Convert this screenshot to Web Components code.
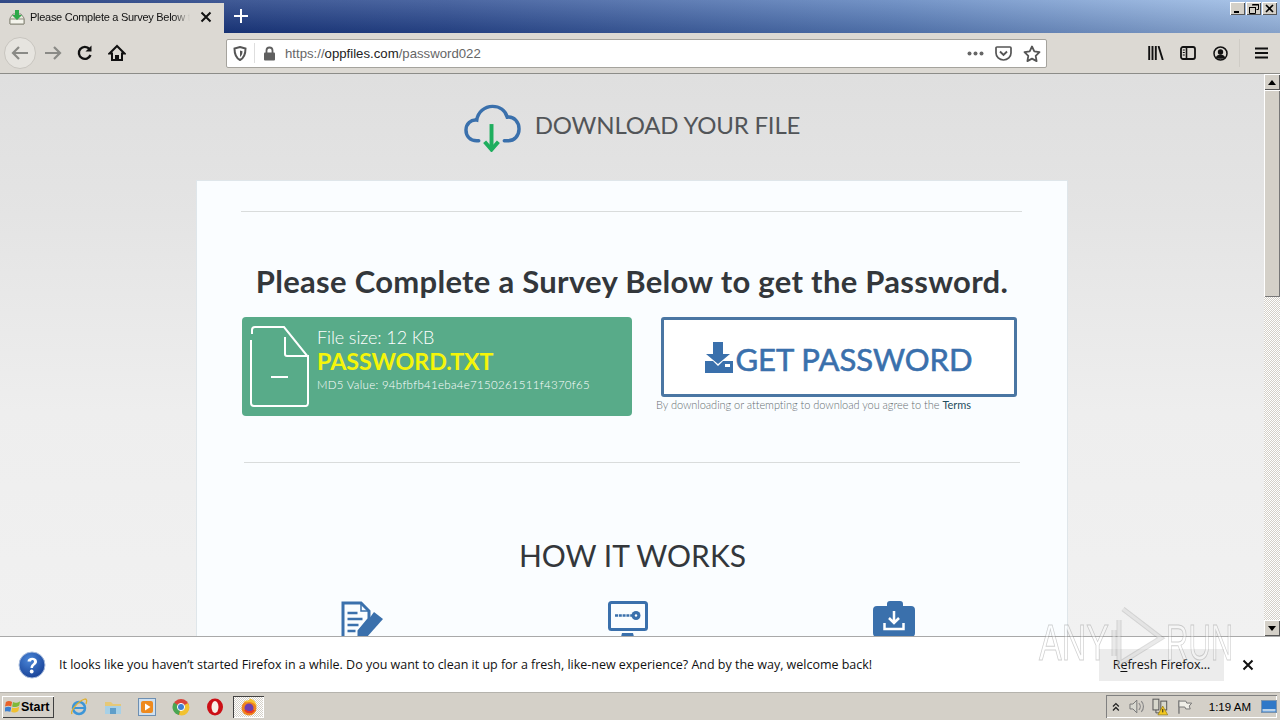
<!DOCTYPE html>
<html>
<head>
<meta charset="utf-8">
<title>Please Complete a Survey Below to get the Password.</title>
<style>
  html, body { margin: 0; height: 720px; overflow: hidden; background: #dcd9d3; }
</style>
</head>
<body>
<x-window></x-window>

<script>
class XTabStrip extends HTMLElement {
    constructor() {
        super();
        this.attachShadow({ mode: 'open' });
        this.shadowRoot.innerHTML = `
      <style>
        :host {
          display: flex;
          height: 33px;
          background: linear-gradient(180deg, rgba(255,255,255,.16), rgba(0,0,30,.14)), linear-gradient(90deg, #0d2a72 0%, #2a4a90 35%, #5a80bc 70%, #9dbde6 100%);
          font: 11px "Liberation Sans", sans-serif;
          color: #111;
        }
        #tab {
          width: 224px;
          margin-top: 3px;
          background: #dcd9d3;
          display: flex;
          align-items: center;
          box-sizing: border-box;
          padding: 0 11px 2px 9px;
        }
        #title {
          margin-left: 5px;
          width: 160px;
          white-space: nowrap;
          letter-spacing: -.28px;
          -webkit-mask-image: linear-gradient(90deg, #000 90%, transparent);
          mask-image: linear-gradient(90deg, #000 90%, transparent);
        }
        #close { margin-left: 10px; }
        #new { margin: 0 0 2px 10px; align-self: center; }
        #spacer { flex: 1; }
        #controls { display: flex; gap: 1px; margin: 2px 3px 0 0; align-self: flex-start; }
        .ctl {
          width: 15px;
          height: 13px;
          background: #d4d0c8;
          box-shadow: inset 1px 1px #fff, inset -1px -1px #555;
          display: flex;
          align-items: center;
          justify-content: center;
        }
      </style>
      <div id="tab">
        <svg width="16" height="16" viewBox="0 0 16 16"><path d="M1 9l3-4h8l3 4v6H1z" fill="#e8e8dc" stroke="#8a8a7c"/><path d="M1 10h14v5H1z" fill="#f4f4ec" stroke="#8a8a7c"/><path d="M6 1h4v5h3l-5 5-5-5h3z" fill="#2fa84a"/></svg>
        <span id="title">Please Complete a Survey Below t</span>
        <svg id="close" width="12" height="12" viewBox="0 0 12 12"><path d="M1.5 1.5l9 9M10.5 1.5l-9 9" stroke="#111" stroke-width="2"/></svg>
      </div>
      <svg id="new" width="14" height="14" viewBox="0 0 14 14"><path d="M7 0v14M0 7h14" stroke="#fff" stroke-width="2"/></svg>
      <div id="spacer"></div>
      <div id="controls">
        <div class="ctl"><svg width="9" height="9" viewBox="0 0 9 9"><path d="M1 7h5v2H1z" fill="#000"/></svg></div>
        <div class="ctl"><svg width="10" height="10" viewBox="0 0 10 10"><path d="M3.5 .5h6v5h-2M.5 3.5h6v6h-6z" fill="none" stroke="#000"/><path d="M3 1h7M0 3.5h7" stroke="#000"/></svg></div>
        <div class="ctl"><svg width="9" height="9" viewBox="0 0 9 9"><path d="M1 1l7 7M8 1l-7 7" stroke="#000" stroke-width="1.6"/></svg></div>
      </div>
    `;
    }
}

class XNavBar extends HTMLElement {
    constructor() {
        super();
        this.attachShadow({ mode: 'open' });
        this.shadowRoot.innerHTML = `
      <style>
        :host {
          display: flex;
          align-items: center;
          height: 41px;
          box-sizing: border-box;
          background: #dcd9d3;
          border-bottom: 1px solid #8c8c88;
          font: 13.2px "Liberation Sans", sans-serif;
        }
        #back {
          width: 32px;
          height: 32px;
          margin-left: 4px;
          border-radius: 50%;
          background: #e6e4df;
          border: 1px solid #c8c5bf;
          box-sizing: border-box;
          display: flex;
          align-items: center;
          justify-content: center;
        }
        .btn { display: flex; }
        #url {
          width: 821px;
          height: 29px;
          margin-left: 100px;
          box-sizing: border-box;
          background: #fff;
          border: 1px solid #a5a39d;
          border-radius: 2px;
          display: flex;
          align-items: center;
        }
        #shield { margin-left: 6px; }
        #sep { width: 1px; height: 20px; background: #dedede; margin: 0 8px 0 7px; }
        #addr { margin-left: 9px; flex: 1; color: #666; }
        #addr b { font-weight: normal; color: #222; }
        #tools { display: flex; align-items: center; margin-left: 101px; }
        #tools svg { display: block; }
        #div { width: 1px; height: 28px; background: #cfccc6; margin: 0 15px 0 11px; }
      </style>
      <div id="back"><svg width="20" height="18" viewBox="0 0 20 18"><path d="M18 9H3M9 3L3 9l6 6" fill="none" stroke="#8a8a86" stroke-width="2.2"/></svg></div>
      <div class="btn" style="margin-left:7px"><svg width="20" height="18" viewBox="0 0 20 18"><path d="M2 9h15M11 3l6 6-6 6" fill="none" stroke="#8a8a86" stroke-width="2.2"/></svg></div>
      <div class="btn" style="margin-left:13px"><svg width="18" height="18" viewBox="0 0 18 18"><path d="M14.5 11a6 6 0 1 1-1-6" fill="none" stroke="#111" stroke-width="2.4"/><path d="M15.5 1.500v6h-6z" fill="#111"/></svg></div>
      <div class="btn" style="margin-left:14px"><svg width="18" height="18" viewBox="0 0 18 18"><path d="M9 2L1.500 9.500H4V16h10V9.500h2.500z" fill="none" stroke="#111" stroke-width="2"/><path d="M7 11h4v5H7z" fill="#111"/></svg></div>
      <div id="url">
        <svg id="shield" width="14" height="15" viewBox="0 0 14 15"><path d="M7 1l5.500 1.500c0 6-1.500 9.500-5.500 11.500C3 12 1.500 8.500 1.500 2.500z" fill="none" stroke="#555" stroke-width="2"/><path d="M7 4.500l2.500.7C9.500 8 8.500 10 7 11z" fill="#555"/></svg>
        <div id="sep"></div>
        <svg width="13" height="15" viewBox="0 0 13 15"><path d="M3.500 7V4.500a3 3 0 0 1 6 0V7" fill="none" stroke="#5f5f5f" stroke-width="1.800"/><rect x="1" y="6.500" width="11" height="8" rx="1" fill="#5f5f5f"/></svg>
        <span id="addr">https://<b>oppfiles.com</b>/password022</span>
        <svg width="17" height="5" viewBox="0 0 17 5" style="margin-right:11px"><circle cx="2.500" cy="2.500" r="2" fill="#666"/><circle cx="8.500" cy="2.500" r="2" fill="#666"/><circle cx="14.500" cy="2.500" r="2" fill="#666"/></svg>
        <svg width="17" height="15" viewBox="0 0 17 15" style="margin-right:11px"><path d="M1 2a1 1 0 0 1 1-1h13a1 1 0 0 1 1 1v5a7.500 7 0 0 1-15 0z" fill="none" stroke="#555" stroke-width="1.700"/><path d="M5 5.500l3.500 3.500L12 5.500" fill="none" stroke="#555" stroke-width="1.900"/></svg>
        <svg width="18" height="17" viewBox="0 0 18 17" style="margin-right:5px"><path d="M9 1.500l2.300 4.900 5.200.7-3.800 3.700.9 5.300L9 13.600l-4.600 2.500.9-5.300L1.500 7.100l5.200-.7z" fill="none" stroke="#555" stroke-width="1.800" stroke-linejoin="round"/></svg>
      </div>
      <div id="tools">
        <svg width="16" height="14" viewBox="0 0 16 14" style="margin-right:16px"><path d="M1.200 0v14M4.500 0v14M7.800 0v14M10.500 0l4.300 14" stroke="#111" stroke-width="1.900" fill="none"/></svg>
        <svg width="16" height="14" viewBox="0 0 16 14" style="margin-right:17px"><rect x="1" y="1" width="14" height="12" rx="2" fill="none" stroke="#111" stroke-width="1.800"/><path d="M6.500 1v12" stroke="#111" stroke-width="1.600"/><path d="M2.800 4h2M2.800 6.500h2M2.800 9h2" stroke="#111"/></svg>
        <svg width="15" height="15" viewBox="0 0 15 15"><circle cx="7.500" cy="7.500" r="6.500" fill="none" stroke="#111" stroke-width="1.500"/><circle cx="7.500" cy="6" r="2.700" fill="#111"/><path d="M2.800 11.500c1-2.200 2.700-3 4.700-3s3.700.8 4.700 3C10.500 13.200 4.500 13.200 2.800 11.500z" fill="#111"/></svg>
        <div id="div"></div>
        <svg width="13" height="12" viewBox="0 0 13 12"><path d="M0 1.500h13M0 6h13M0 10.500h13" stroke="#111" stroke-width="2"/></svg>
      </div>
    `;
    }
}

class XScrollbar extends HTMLElement {
    constructor() {
        super();
        this.attachShadow({ mode: 'open' });
        this.shadowRoot.innerHTML = `
      <style>
        :host {
          display: flex;
          flex-direction: column;
          width: 16px;
          flex: none;
          background: repeating-conic-gradient(#d4d0c8 0 25%, #fff 0 50%) 0 0 / 2px 2px;
        }
        .b {
          height: 16px;
          flex: none;
          background: #d4d0c8;
          box-shadow: inset 1px 1px #fff, inset -1px -1px #555;
          display: flex;
          align-items: center;
          justify-content: center;
        }
        #thumb { height: 207px; flex: none; background: #d4d0c8; box-shadow: inset 1px 1px #fff, inset -1px -1px #777; }
        #rest { flex: 1; }
      </style>
      <div class="b"><svg width="8" height="5" viewBox="0 0 8 5"><path d="M4 0l4 5H0z"/></svg></div>
      <div id="thumb"></div>
      <div id="rest"></div>
      <div class="b"><svg width="8" height="5" viewBox="0 0 8 5"><path d="M0 0h8L4 5z"/></svg></div>
    `;
    }
}

class XFileBox extends HTMLElement {
    constructor() {
        super();
        this.attachShadow({ mode: 'open' });
        this.shadowRoot.innerHTML = `
      <style>
        :host {
          display: flex;
          width: 390px;
          height: 99px;
          box-sizing: border-box;
          background: #58ab89;
          border-radius: 4px;
          padding: 8px 0 0 8px;
          color: #fff;
          font-family: Lato, sans-serif;
        }
        #text { margin-left: 8px; }
        #size { font-size: 18px; line-height: 24px; font-weight: 300; letter-spacing: -.1px; }
        #name { font-size: 23.3px; line-height: 25px; font-weight: 700; color: #f5f50a; letter-spacing: -.1px; }
        #md5 { font-size: 11.5px; line-height: 21px; font-weight: 300; letter-spacing: .3px; }
      </style>
      <svg width="59" height="84" viewBox="0 0 59 84" style="flex:none"><path d="M2 9V5a3 3 0 0 1 3-3h29l25 31" fill="none" stroke="#fff" stroke-width="2"/><path d="M1 15v63a3 3 0 0 0 3 3h52a3 3 0 0 0 2-3V30" fill="none" stroke="#fff" stroke-width="2"/><path d="M35 12v17a2 2 0 0 0 2 2h20" fill="none" stroke="#fff" stroke-width="2"/><path d="M21 52h17" stroke="#fff" stroke-width="2"/></svg>
      <div id="text">
        <div id="size">File size: 12 KB</div>
        <div id="name">PASSWORD.TXT</div>
        <div id="md5">MD5 Value: 94bfbfb41eba4e7150261511f4370f65</div>
      </div>
    `;
    }
}

class XGetButton extends HTMLElement {
    constructor() {
        super();
        this.attachShadow({ mode: 'open' });
        this.shadowRoot.innerHTML = `
      <style>
        :host { display: block; width: 362px; font-family: Lato, sans-serif; }
        #btn {
          width: 356px;
          height: 80px;
          margin-left: 5px;
          box-sizing: border-box;
          border: 3px solid #4a76a3;
          border-radius: 3px;
          background: #fff;
          display: flex;
          align-items: center;
          justify-content: center;
          gap: 2px;
          color: #3a70ac;
          font-size: 31px;
          font-weight: 400;
          -webkit-text-stroke: .6px #3a70ac;
        }
        #btn span { margin-top: 4px; }
        #note { font-size: 11px; line-height: 16px; font-weight: 300; color: #666d72; letter-spacing: -.04px; white-space: nowrap; }
        #note a { color: #1f4d5e; font-weight: 400; }
      </style>
      <div id="btn">
        <svg width="28" height="31" viewBox="0 0 28 31" style="flex:none"><path d="M8 0h10v12h7L13 22 1 12h7z" fill="#3a70ac"/><path d="M0 19h8l5 5 5-5h10v12H0z" fill="#3a70ac"/><rect x="20" y="22" width="5" height="3" fill="#fff"/></svg>
        <span>GET PASSWORD</span>
      </div>
      <div id="note">By downloading or attempting to download you agree to the <a>Terms</a></div>
    `;
    }
}

class XStepIcon extends HTMLElement {
    constructor() {
        super();
        this.attachShadow({ mode: 'open' });
    }

    connectedCallback() {
        const icons = {
            doc: `<svg width="44" height="44" viewBox="0 0 44 44"><path d="M2 2h18l8 8v8L18 30v12H2z" fill="none" stroke="#3a70ac" stroke-width="3"/><path d="M20 2v8h8" fill="none" stroke="#3a70ac" stroke-width="1.500"/><path d="M6.500 12h10M6.500 18h15M6.500 24h11M6.500 30h8" stroke="#3a70ac" stroke-width="2.500"/><path d="M33 11l9 7-16 18-9 5 2-11z" fill="#3a70ac"/></svg>`,
            key: `<svg width="40" height="44" viewBox="0 0 40 44"><rect x="1.500" y="1.500" width="37" height="27" rx="2" fill="none" stroke="#3a70ac" stroke-width="3"/><circle cx="28" cy="14.500" r="4.500" fill="#3a70ac"/><circle cx="28" cy="14.500" r="1.200" fill="#fff"/><path d="M7 14.500h18" stroke="#3a70ac" stroke-width="2.500" stroke-dasharray="3 .8"/><path d="M14 32h11l1 4H13z" fill="#3a70ac"/></svg>`,
            box: `<svg width="42" height="44" viewBox="0 0 42 44"><path d="M4 5h10V3a3 3 0 0 1 3-3h10a3 3 0 0 1 3 3v2h8a4 4 0 0 1 4 4v23a4 4 0 0 1-4 4H4a4 4 0 0 1-4-4V9a4 4 0 0 1 4-4z" fill="#3a70ac"/><path d="M21 10v12M16 17l5 5 5-5M11.500 22v6h19v-6" fill="none" stroke="#fff" stroke-width="2.500"/></svg>`
        };
        this.shadowRoot.innerHTML = `
      <style>
        :host { display: flex; justify-content: center; height: 44px; }
      </style>
      ${icons[this.getAttribute('kind')]}
    `;
    }
}

class XPage extends HTMLElement {
    constructor() {
        super();
        this.attachShadow({ mode: 'open' });
        this.shadowRoot.innerHTML = `
      <style>
        :host {
          display: block;
          flex: 1;
          min-width: 0;
          overflow: hidden;
          background: linear-gradient(180deg, #dfdfdf 0, #e4e4e4 25%, #eeeeee 60%, #f1f1f1 100%);
          font-family: Lato, sans-serif;
        }
        #head {
          display: flex;
          align-items: center;
          justify-content: center;
          height: 106px;
          box-sizing: border-box;
          padding-bottom: 5px;
          color: #525558;
          font-size: 24px;
          font-weight: 400;
          letter-spacing: -.2px;
        }
        #head svg { margin: 6px 14px 0 0; }
        #card {
          width: 872px;
          margin-left: 196px;
          box-sizing: border-box;
          background: #fafdff;
          border: 1px solid #dfe6ea;
          border-bottom: none;
          padding: 30px 45px 0 44px;
        }
        hr { border: 0; border-top: 1px solid #d9dcdc; margin: 0; }
        h1 {
          margin: 51px 0 0;
          padding-left: 1px;
          text-align: center;
          color: #33373b;
          font-size: 31px;
          line-height: 36px;
          font-weight: 700;
          letter-spacing: .29px;
          white-space: nowrap;
        }
        #row { display: flex; gap: 24px; margin: 18px 0 0 1px; }
        #hr2 { margin: 46px 2px 0 3px; }
        h2 {
          margin: 74px 0 0;
          padding-left: 2px;
          text-align: center;
          color: #33373b;
          font-size: 30px;
          line-height: 36px;
          font-weight: 400;
          letter-spacing: 0;
        }
        #steps {
          display: grid;
          grid-template-columns: repeat(3, 265.5px);
          margin: 28px 0 0 -11px;
          height: 60px;
        }
      </style>
      <div id="head">
        <svg width="57" height="48" viewBox="0 0 58 48">
          <path d="M15 37H13C6 37 2 32 2 26c0-6 5-11 11-10 1-8 8-14 16-14 7 0 13 4 15 11 7-1 12 5 12 12s-5 12-11 12h-4" fill="none" stroke="#3a70ac" stroke-width="3.500" stroke-linecap="round"/>
          <path d="M28 20v24" stroke="#1fae5e" stroke-width="4"/>
          <path d="M21 38l7 8 7-8" fill="none" stroke="#1fae5e" stroke-width="4"/>
        </svg>
        <span>DOWNLOAD YOUR FILE</span>
      </div>
      <div id="card">
        <hr>
        <h1>Please Complete a Survey Below to get the Password.</h1>
        <div id="row">
          <x-file-box></x-file-box>
          <x-get-button></x-get-button>
        </div>
        <hr id="hr2">
        <h2>HOW IT WORKS</h2>
        <div id="steps">
          <x-step-icon kind="doc"></x-step-icon>
          <x-step-icon kind="key"></x-step-icon>
          <x-step-icon kind="box"></x-step-icon>
        </div>
      </div>
    `;
    }
}

class XNotice extends HTMLElement {
    constructor() {
        super();
        this.attachShadow({ mode: 'open' });
        this.shadowRoot.innerHTML = `
      <style>
        :host {
          display: flex;
          align-items: center;
          height: 57px;
          box-sizing: border-box;
          background: #fff;
          border-top: 1px solid #a9a9a9;
          border-bottom: 1px solid #b5b3ad;
          font: 12.5px "Open Sans", sans-serif;
          color: #111;
        }
        #q { margin-left: 18px; flex: none; }
        #msg { margin-left: 13px; width: 1040px; white-space: nowrap; letter-spacing: -.015px; }
        #refresh {
          width: 125px;
          height: 32px;
          background: #ececec;
          display: flex;
          align-items: center;
          justify-content: center;
        }
        #refresh u { text-underline-offset: 2px; }
        #x { margin-left: 18px; }
      </style>
      <svg id="q" width="28" height="28" viewBox="0 0 28 28">
        <defs><radialGradient id="g" cx=".4" cy=".3" r=".8"><stop offset="0" stop-color="#4a86d8"/><stop offset="1" stop-color="#123a90"/></radialGradient></defs>
        <circle cx="14" cy="14" r="13" fill="url(#g)" stroke="#a8bcdc"/>
        <path d="M9.500 10.500c0-5 9.500-5 9.500 0 0 3.500-4 3.500-4 6.500h-2.500c0-4 3.500-4 3.500-6.500 0-2-3-2-3 0z" fill="#fff"/>
        <circle cx="13.700" cy="20.500" r="1.900" fill="#fff"/>
      </svg>
      <span id="msg">It looks like you haven’t started Firefox in a while. Do you want to clean it up for a fresh, like-new experience? And by the way, welcome back!</span>
      <div id="refresh"><span>R<u>e</u>fresh Firefox…</span></div>
      <svg id="x" width="12" height="12" viewBox="0 0 12 12"><path d="M1.500 1.500l9 9M10.500 1.500l-9 9" stroke="#111" stroke-width="2"/></svg>
    `;
    }
}

class XTaskbar extends HTMLElement {
    constructor() {
        super();
        this.attachShadow({ mode: 'open' });
        this.shadowRoot.innerHTML = `
      <style>
        :host {
          display: flex;
          align-items: center;
          height: 27px;
          box-sizing: border-box;
          background: #d4d0c8;
          font: 11.5px "Liberation Sans", sans-serif;
          color: #000;
        }
        #start {
          width: 52px;
          height: 22px;
          margin-left: 2px;
          box-sizing: border-box;
          box-shadow: inset 1px 1px #fff, inset -1px -1px #404040;
          display: flex;
          align-items: center;
          padding-left: 3px;
          font-weight: 700;
          font-size: 12.5px;
        }
        #quick { display: flex; align-items: center; margin-left: 8px; }
        .q { width: 34px; display: flex; justify-content: center; }
        #active {
          width: 31px;
          height: 22px;
          margin-left: 1px;
          display: flex;
          align-items: center;
          justify-content: center;
          box-sizing: border-box;
          background: repeating-conic-gradient(#d4d0c8 0 25%, #fff 0 50%) 0 0 / 2px 2px;
          box-shadow: inset 1px 1px #404040, inset -1px -1px #fff;
        }
        #tray {
          margin-left: auto;
          margin-right: 3px;
          width: 171px;
          height: 23px;
          box-sizing: border-box;
          box-shadow: inset 1px 1px #808080, inset -1px -1px #fff;
          display: flex;
          align-items: center;
          padding-left: 5px;
        }
        #clock { margin-left: 16px; font-size: 11.5px; white-space: nowrap; }
      </style>
      <div id="start">
        <svg width="16" height="15" viewBox="0 0 18 16"><path d="M1 3c3-2 5-1 7 0L7 8C5 7 3 7 0 8z" fill="#e8622a"/><path d="M9 3c2 1 5 1 8-1l-1 5c-3 2-6 2-8 1z" fill="#7fb93a"/><path d="M0 9c3-1 5-1 7 0l-1 5c-2-1-4-1-7 0z" fill="#3b7fd0"/><path d="M8 9c2 1 5 1 8-1l-1 5c-3 2-6 2-8 1z" fill="#f0c030"/></svg>
        <span>Start</span>
      </div>
      <div id="quick">
        <div class="q"><svg width="18" height="18" viewBox="0 0 18 18"><circle cx="9" cy="10" r="6" fill="none" stroke="#3d96d8" stroke-width="2.500"/><path d="M3 10h12" stroke="#3d96d8" stroke-width="2"/><path d="M2 16C0 13 8 3 15 1c2 0 2 2 1 5" fill="none" stroke="#e0b030" stroke-width="1.300"/></svg></div>
        <div class="q"><svg width="18" height="16" viewBox="0 0 18 16"><path d="M1 3h6l2 2h8v10H1z" fill="#e6c878"/><path d="M1 7h16v8H1z" fill="#a7d0e6"/><path d="M6 9h6v6H6z" fill="#5f9ec9"/></svg></div>
        <div class="q"><svg width="18" height="18" viewBox="0 0 18 18"><rect x=".5" y=".5" width="17" height="17" fill="#cfe0f0" stroke="#6d8fb2"/><rect x="3" y="3" width="12" height="12" rx="2" fill="#ee8a1f"/><path d="M7 5.500l5.500 3.500L7 12.500z" fill="#fff"/></svg></div>
        <div class="q"><svg width="18" height="18" viewBox="0 0 18 18"><circle cx="9" cy="9" r="8" fill="#d9443b"/><path d="M9 9L2 4.500A8 8 0 0 0 7 17z" fill="#4aa652"/><path d="M9 9l7-4a8 8 0 0 1-9 12z" fill="#f2c230"/><circle cx="9" cy="9" r="3.600" fill="#3f7fd2" stroke="#fff"/></svg></div>
        <div class="q"><svg width="18" height="18" viewBox="0 0 18 18"><ellipse cx="9" cy="9" rx="8" ry="8.500" fill="#cc0f16"/><ellipse cx="9" cy="9" rx="3.500" ry="6" fill="#f8f0e8"/></svg></div>
      </div>
      <div id="active"><svg width="18" height="18" viewBox="0 0 18 18"><circle cx="9" cy="10" r="7.500" fill="#f0841c"/><path d="M4 3c1 2 3 1 5 1 4 0 8 3 8 6 0-5-3-9-8-9.500 1 1.500 0 2-1 2z" fill="#f7c22f"/><circle cx="9" cy="10" r="4.500" fill="#6f3fb0"/><path d="M5 12c2 3 7 3 9 0" fill="none" stroke="#e4372b" stroke-width="2"/></svg></div>
      <div id="tray">
        <svg width="10" height="10" viewBox="0 0 10 10"><path d="M2 4.500l3-3 3 3M2 8.500l3-3 3 3" fill="none" stroke="#222" stroke-width="1.300"/></svg>
        <svg width="17" height="15" viewBox="0 0 17 15" style="margin-left:8px"><path d="M1 5h3l4-4v13l-4-4H1z" fill="#d8d8d0" stroke="#777"/><path d="M10 4c2 2 2 5 0 7M12.500 2c3 3 3 8 0 11" fill="none" stroke="#888" stroke-width="1.200"/></svg>
        <svg width="17" height="18" viewBox="0 0 17 18" style="margin-left:7px"><rect x="1" y="1" width="6" height="11" fill="#d8d8cc" stroke="#555"/><rect x="9" y="3" width="6" height="9" fill="#d8d8cc" stroke="#555"/><path d="M4 12v3h8v-3" fill="none" stroke="#555"/><path d="M11 8l5 9H6z" fill="#f3c81e" stroke="#8a6d00" stroke-width=".6"/><path d="M11 11v3.500" stroke="#222"/></svg>
        <svg width="16" height="16" viewBox="0 0 16 16" style="margin-left:8px"><path d="M2 1v14" stroke="#777" stroke-width="1.400"/><path d="M2 2h7l1 2h5l-2.500 3 1 3H9L8 8H2z" fill="#f0efe8" stroke="#777"/></svg>
        <span id="clock">1:19 AM</span>
        <svg width="16" height="13" viewBox="0 0 16 13" style="margin-left:10px;flex:none"><rect x=".5" y=".5" width="15" height="12" fill="#2f78c8" stroke="#7a93ad"/><rect x="1.500" y="9" width="13" height="2.500" fill="#b9d2ea"/></svg>
      </div>
    `;
    }
}

class XWatermark extends HTMLElement {
    constructor() {
        super();
        this.attachShadow({ mode: 'open' });
        this.shadowRoot.innerHTML = `
      <style>
        :host {
          position: absolute;
          left: 1039px;
          top: 606px;
          width: 194px;
          height: 60px;
          display: flex;
          align-items: center;
          pointer-events: none;
          font: 50px "Liberation Sans", sans-serif;
          color: rgba(255,255,255,.3);
          -webkit-text-stroke: 1px rgba(110,110,110,.32);
        }
        span { display: inline-block; transform-origin: left center; margin-top: 13px; white-space: nowrap; flex: none; }
        #any { width: 71px; transform: scaleX(.68); }
        #run { width: 67px; transform: scaleX(.62); }
        svg { flex: none; }
      </style>
      <span id="any">ANY</span>
      <svg width="56" height="60" viewBox="0 0 56 60"><path d="M4 24v26M9 14v44l42-26L13 3" fill="none" stroke="rgba(120,120,120,.25)" stroke-width="5"/><path d="M4 24v26M9 14v44l42-26L13 3" fill="none" stroke="rgba(255,255,255,.4)" stroke-width="3"/></svg>
      <span id="run">RUN</span>
    `;
    }
}

class XWindow extends HTMLElement {
    constructor() {
        super();
        this.attachShadow({ mode: 'open' });
        this.shadowRoot.innerHTML = `
      <style>
        :host {
          display: flex;
          flex-direction: column;
          position: relative;
          width: 1280px;
          height: 720px;
          overflow: hidden;
        }
        #view { display: flex; height: 562px; }
      </style>
      <x-tab-strip></x-tab-strip>
      <x-nav-bar></x-nav-bar>
      <div id="view">
        <x-page></x-page>
        <x-scrollbar></x-scrollbar>
      </div>
      <x-notice></x-notice>
      <x-taskbar></x-taskbar>
      <x-watermark></x-watermark>
    `;
    }
}

customElements.define('x-tab-strip', XTabStrip);
customElements.define('x-nav-bar', XNavBar);
customElements.define('x-scrollbar', XScrollbar);
customElements.define('x-file-box', XFileBox);
customElements.define('x-get-button', XGetButton);
customElements.define('x-step-icon', XStepIcon);
customElements.define('x-page', XPage);
customElements.define('x-notice', XNotice);
customElements.define('x-taskbar', XTaskbar);
customElements.define('x-watermark', XWatermark);
customElements.define('x-window', XWindow);
</script>
</body>
</html>
